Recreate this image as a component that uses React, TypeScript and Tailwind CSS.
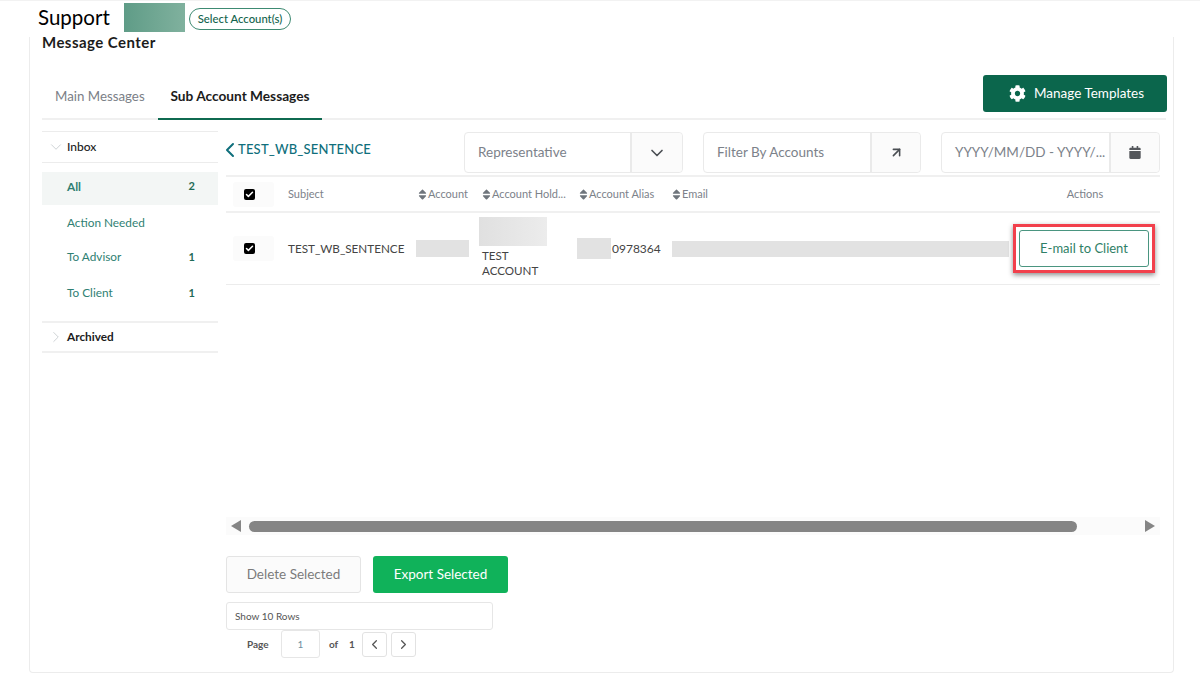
import { ChevronDown, ChevronLeft, ChevronRight, ArrowUpRight, Check } from "lucide-react";
import { FaCog, FaCalendar, FaSort } from "react-icons/fa";

const Checkbox = () => (
  <div className="flex h-[25px] w-[41px] items-center rounded-[3px] bg-[#fbfbfb] pl-[11px]">
    <div className="flex h-[11px] w-[11px] items-center justify-center rounded-[2px] bg-black">
      <Check className="h-[9px] w-[9px] text-white" strokeWidth={4} />
    </div>
  </div>
);

const Sort = ({ label, offset }: { label: string; offset: string }) => (
  <div className={`flex items-center gap-[1px] whitespace-nowrap text-[11px] text-[#7c828a] ${offset}`}>
    <FaSort className="h-[13px] w-[9px] text-[#6f757c]" />
    <span>{label}</span>
  </div>
);

const Filter = ({ label, width, btn, icon }: { label: string; width: string; btn: string; icon: React.ReactNode }) => (
  <div className={`flex h-[41px] rounded-[4px] border border-[#eaeaea] ${width}`}>
    <div className="flex min-w-0 flex-1 items-center pb-[1px] pl-[13px] text-[13.5px] text-[#7c828a] whitespace-nowrap">{label}</div>
    <div className={`flex items-center justify-center rounded-r-[4px] border-l-2 border-[#eaeaea] bg-[#fbfbfb] ${btn}`}>{icon}</div>
  </div>
);

const Item = ({ label, count, className }: { label: string; count?: string; className: string }) => (
  <div className={`flex items-center justify-between pl-[25px] pr-[23px] text-[11.8px] text-[#2f7f73] ${className}`}>
    <span>{label}</span>
    {count && <span className="font-bold text-[11px] text-[#1f6b57]">{count}</span>}
  </div>
);

export default function App() {
  return (
    <div className="h-[680px] w-[1200px] overflow-hidden bg-white text-[#333] font-['Lato','Noto_Sans',sans-serif]">
      <div className="flex h-[37px] items-start border-t border-[#f2f2f2] pl-[38px]">
        <div className="mt-[2px] w-[86px] text-[20.5px] leading-[28px] text-black">Support</div>
        <div className="mt-[2px] h-[29px] w-[61px] bg-gradient-to-r from-[#5f9c87] to-[#80b19e]" />
        <div className="ml-[4px] mt-[7px] flex h-[22px] w-[102px] items-center justify-center rounded-full border border-[#3d8a72] text-[11.3px] font-medium text-[#12634c]">
          Select Account(s)
        </div>
      </div>

      <div className="ml-[29px] h-[636px] w-[1145px] rounded-b-[4px] border-x border-b border-[#ececec] pl-[12px] pr-[7px]">
        <div className="h-[13px] text-[15px] font-bold leading-[10px] tracking-[0.45px] text-[#1c1c1c]">Message Center</div>

        <div className="mt-[24px] flex h-[46px] items-start justify-between border-b-2 border-[#f0f0f0]">
          <div className="flex h-[46px] items-stretch">
            <div className="flex w-[116px] items-center pb-[1px] pl-[13px] text-[13.3px] text-[#7b8087]">Main Messages</div>
            <div className="flex w-[164px] items-center justify-center border-b-2 border-[#0f6a50] text-[13.7px] font-bold text-[#1c1c1c]">
              Sub Account Messages
            </div>
          </div>
          <div className="mr-[-1px] mt-[1px] flex h-[37px] w-[184px] items-center rounded-[3px] bg-[#0b664c] pb-[1px] pl-[26px] text-[13.5px] text-white">
            <FaCog className="mr-[8px] h-[17px] w-[17px]" />
            Manage Templates
          </div>
        </div>

        <div className="mt-[11px] flex">
          <aside className="w-[176px] shrink-0">
            <div className="flex h-[32px] items-center gap-[2px] border-y border-[#ececec] pb-[1px] pl-[5px] text-[12px] font-medium text-[#1c1c1c]">
              <ChevronDown className="h-[18px] w-[18px] text-[#c4c8cc]" strokeWidth={1.1} />
              Inbox
            </div>
            <Item label="All" count="2" className="mt-[9px] h-[33px] bg-[#f3f6f5] pb-[4px] font-bold" />
            <Item label="Action Needed" className="h-[36px]" />
            <Item label="To Advisor" count="1" className="h-[32px]" />
            <Item label="To Client" count="1" className="mb-[10px] mt-[2px] h-[36px]" />
            <div className="flex h-[32px] items-center gap-[2px] border-y-2 border-[#f0f0f0] pb-[1px] pl-[5px] text-[11.8px] font-bold text-[#1c1c1c]">
              <ChevronRight className="h-[18px] w-[18px] text-[#c4c8cc]" strokeWidth={1.1} />
              Archived
            </div>
          </aside>

          <main className="ml-[8px] mt-[1px] w-[934px]">
            <div className="flex h-[45px] items-start border-b-2 border-[#f0f0f0]">
              <div className="mt-[6px] flex items-center text-[13px] font-medium tracking-[0.2px] text-[#0f6f7c]">
                <ChevronLeft className="ml-[-8px] mr-[-4px] h-[24px] w-[24px]" strokeWidth={2} />
                TEST_WB_SENTENCE
              </div>
              <div className="ml-auto flex gap-[20px]">
                <Filter label="Representative" width="w-[219px]" btn="w-[52px]" icon={<ChevronDown className="h-[20px] w-[20px] text-[#4b4f54]" />} />
                <Filter label="Filter By Accounts" width="w-[218px]" btn="w-[50px]" icon={<ArrowUpRight className="h-[15px] w-[15px] text-[#4b4f54]" strokeWidth={2.5} />} />
                <Filter label="YYYY/MM/DD - YYYY/..." width="w-[219px]" btn="w-[50px]" icon={<FaCalendar className="h-[13px] w-[12px] text-[#55585c]" />} />
              </div>
            </div>

            <div className="grid h-[36px] grid-cols-[62px_128px_63px_98px_95px_1fr_150px] items-center border-b-2 border-[#f0f0f0] text-[11px] text-[#7c828a]">
              <div className="pl-[7px]"><Checkbox /></div>
              <div>Subject</div>
              <Sort label="Account" offset="pl-[2px]" />
              <Sort label="Account Hold..." offset="pl-[3px]" />
              <Sort label="Account Alias" offset="pl-[2px]" />
              <Sort label="Email" offset="" />
              <div className="text-center">Actions</div>
            </div>

            <div className="grid h-[72px] grid-cols-[62px_128px_63px_98px_95px_1fr_150px] items-center border-b border-[#ececec] text-[12px] text-[#444]">
              <div className="pl-[7px]"><Checkbox /></div>
              <div className="text-[11.7px] whitespace-nowrap">TEST_WB_SENTENCE</div>
              <div className="mr-[10px] h-[17px] bg-[#e2e2e2]" />
              <div className="pb-[2px]">
                <div className="h-[29px] w-[68px] bg-gradient-to-r from-[#e0e0e0] to-[#ececec]" />
                <div className="mt-[2px] pl-[3px] text-[11.6px] leading-[15px]">TEST<br />ACCOUNT</div>
              </div>
              <div className="flex items-center">
                <div className="h-[21px] w-[34px] bg-[#e2e2e2]" />
                <span className="pl-[1px]">0978364</span>
              </div>
              <div className="mr-[1px] h-[16px] bg-[#e2e2e2]" />
              <div className="flex justify-end pr-[5px]">
                <div className="border-[3px] border-[#f2404c] p-[3px] shadow-[0_2px_5px_rgba(0,0,0,0.45)]">
                  <div className="flex h-[37px] w-[130px] items-center justify-center rounded-[3px] border-[1.5px] border-[#4a9580] text-[13px] text-[#2f7f66]">
                    E-mail to Client
                  </div>
                </div>
              </div>
            </div>

            <div className="mt-[232px] flex h-[18px] items-center bg-[#fbfbfb] pl-[5px] pr-[5px]">
              <svg width="10" height="12" viewBox="0 0 10 12"><path d="M0 6 L10 0 V12 Z" fill="#858585" /></svg>
              <div className="ml-[8px] h-[11px] w-[828px] rounded-full bg-[#858585]" />
              <svg className="ml-auto" width="10" height="12" viewBox="0 0 10 12"><path d="M10 6 L0 0 V12 Z" fill="#858585" /></svg>
            </div>

            <div className="mt-[21px] flex gap-[12px] text-[13.5px]">
              <div className="flex h-[37px] w-[135px] items-center justify-center rounded-[3px] border border-[#e4e4e4] bg-[#fbfbfb] text-[#7b7b7b]">Delete Selected</div>
              <div className="flex h-[37px] w-[135px] items-center justify-center rounded-[3px] bg-[#10b25a] text-white">Export Selected</div>
            </div>

            <div className="mt-[9px] flex h-[28px] w-[267px] items-center rounded-[3px] border border-[#e6e6e6] pl-[8px] text-[10px] text-[#555]">Show 10 Rows</div>

            <div className="flex h-[28px] items-center text-[10px] font-bold text-[#555]">
              <span className="ml-[21px] w-[34px]">Page</span>
              <div className="flex h-[28px] w-[39px] items-center justify-center rounded-[3px] border border-[#e6e6e6] font-normal text-[#6f8fa0]">1</div>
              <span className="ml-[9px] w-[20px]">of</span>
              <span className="w-[13px]">1</span>
              <div className="flex h-[25px] w-[25px] items-center justify-center rounded-[3px] border border-[#e2e2e2]"><ChevronLeft className="h-[15px] w-[15px] text-[#555]" /></div>
              <div className="ml-[4px] flex h-[25px] w-[25px] items-center justify-center rounded-[3px] border border-[#e2e2e2]"><ChevronRight className="h-[15px] w-[15px] text-[#555]" /></div>
            </div>
          </main>
        </div>
      </div>
    </div>
  );
}
